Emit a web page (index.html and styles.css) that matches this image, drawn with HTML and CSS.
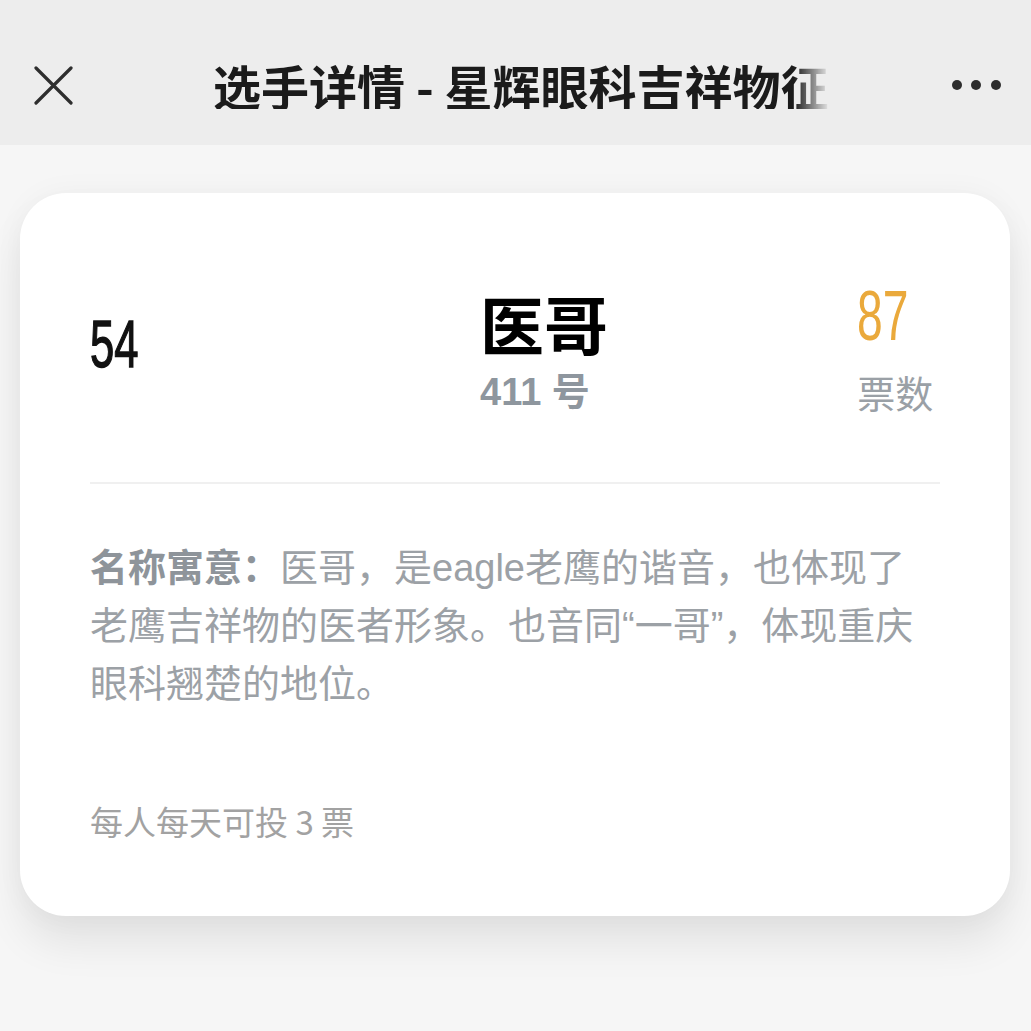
FILE: index.html
```html
<!DOCTYPE html>
<html lang="zh-CN">
<head>
    <meta charset="UTF-8">
    <meta name="viewport" content="width=device-width, initial-scale=1.0">
    <title>选手详情</title>
    <link rel="stylesheet" href="styles.css">
</head>
<body>
    <!-- Top navigation bar -->
    <div class="nav-bar">
        <svg class="nav-close" width="39" height="39" viewBox="0 0 39 39">
            <path d="M2 2 L37 37 M37 2 L2 37" stroke="#2e2e2e" stroke-width="3.2" stroke-linecap="round" fill="none"/>
        </svg>
        <div class="nav-title">选手详情 - 星辉眼科吉祥物征集活动</div>
        <svg class="nav-more" width="52" height="12" viewBox="0 0 52 12">
            <circle cx="6" cy="6" r="5" fill="#2e2e2e"/>
            <circle cx="25" cy="6" r="5" fill="#2e2e2e"/>
            <circle cx="45" cy="6" r="5" fill="#2e2e2e"/>
        </svg>
    </div>

    <!-- Player card -->
    <div class="player-card">
        <div class="player-summary">
            <div class="player-rank"><span>54</span></div>
            <div class="player-main">
                <div class="player-name">医哥</div>
                <div class="player-number">411 号</div>
            </div>
            <div class="player-votes">
                <div class="votes-count"><span>87</span></div>
                <div class="votes-label">票数</div>
            </div>
        </div>

        <div class="player-desc">
            <span class="desc-label">名称寓意：</span>医哥，是eagle老鹰的谐音，也体现了老鹰吉祥物的医者形象。也音同“一哥”，体现重庆眼科翘楚的地位。
        </div>

        <div class="vote-rule">每人每天可投 3 票</div>
    </div>
</body>
</html>
```

FILE: styles.css
```css
/* Page base */
body {
    margin: 0;
    padding: 0 0 115px;
    background-color: #f6f6f6;
    font-family: "Noto Sans CJK SC", "Noto Sans", sans-serif;
}

/* Navigation bar */
.nav-bar {
    height: 145px;
    box-sizing: border-box;
    padding: 25px 28px 0 34px;
    background-color: #ededed;
    display: flex;
    align-items: center;
}

.nav-close {
    flex: none;
}

.nav-title {
    flex: none;
    width: 617px;
    margin-left: 140px;
    font-size: 48px;
    font-weight: 700;
    color: #1b1b1b;
    line-height: 1;
    white-space: nowrap;
    overflow: hidden;
    -webkit-mask-image: linear-gradient(to right, #000 calc(100% - 36px), transparent);
    mask-image: linear-gradient(to right, #000 calc(100% - 36px), transparent);
}

.nav-more {
    flex: none;
    margin-left: auto;
}

/* Card */
.player-card {
    height: 723px;
    box-sizing: border-box;
    margin: 48px 21px 0 20px;
    padding: 0 70px;
    background-color: #fff;
    border-radius: 46px;
    box-shadow: 0 28px 40px rgba(0, 0, 0, 0.08), 0 0 30px rgba(0, 0, 0, 0.04);
}

/* Rank / name / votes row */
.player-summary {
    display: grid;
    grid-template-columns: 390px 1fr auto;
    align-items: start;
    padding: 97px 5px 71px 0;
    border-bottom: 2px solid #f0f0f0;
}

.player-rank {
    margin-top: 21px;
    font-family: "Liberation Sans", Arial, sans-serif;
    font-size: 66px;
    line-height: 66px;
    color: #111;
    -webkit-text-stroke: 1.4px #111;
}

.player-rank span,
.votes-count span {
    display: inline-block;
    transform: scaleX(0.66);
    transform-origin: left center;
}

.player-name {
    font-size: 64px;
    font-weight: 700;
    line-height: 64px;
    color: #000;
}

.player-number {
    margin-top: 19px;
    font-family: "Liberation Sans", "Noto Sans CJK SC", sans-serif;
    font-size: 38px;
    font-weight: 700;
    line-height: 38px;
    color: #8e969e;
}

.votes-count {
    font-family: "Liberation Sans", Arial, sans-serif;
    font-size: 70px;
    line-height: 52px;
    color: #eaa93b;
}

.votes-label {
    margin-top: 31px;
    font-size: 38px;
    line-height: 38px;
    color: #9aa0a6;
}

/* Description */
.player-desc {
    margin-top: 55px;
    font-family: "Liberation Sans", "Noto Sans CJK SC", sans-serif;
    font-size: 38px;
    line-height: 58px;
    color: #9ca1a6;
}

.desc-label {
    font-weight: 700;
    color: #8e949a;
}

/* Footer rule */
.vote-rule {
    margin-top: 92px;
    font-size: 33px;
    line-height: 33px;
    color: #a2a2a2;
}
```
